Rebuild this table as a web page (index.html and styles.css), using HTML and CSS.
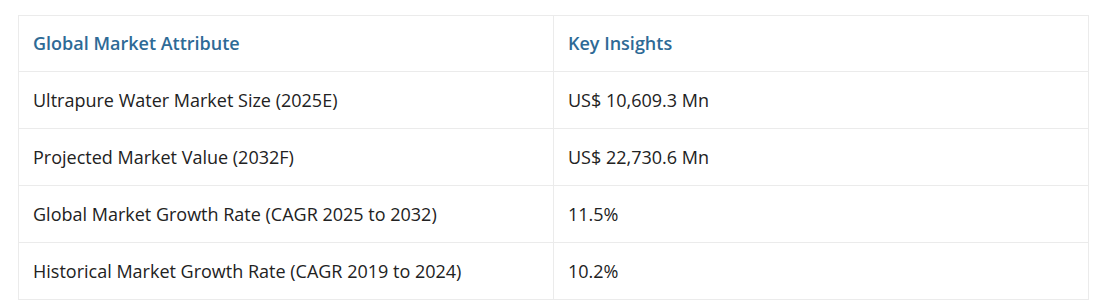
FILE: index.html
```html
<!DOCTYPE html>
<html lang="en">
<head>
<meta charset="utf-8">
<title>Ultrapure Water Market</title>
<link rel="stylesheet" href="styles.css">
</head>
<body>
<div class="wrap">
<table class="insights">
<thead>
<tr><th>Global Market Attribute</th><th>Key Insights</th></tr>
</thead>
<tbody>
<tr><td>Ultrapure Water Market Size (2025E)</td><td>US$ 10,609.3 Mn</td></tr>
<tr><td>Projected Market Value (2032F)</td><td>US$ 22,730.6 Mn</td></tr>
<tr><td>Global Market Growth Rate (CAGR 2025 to 2032)</td><td>11.5%</td></tr>
<tr><td>Historical Market Growth Rate (CAGR 2019 to 2024)</td><td>10.2%</td></tr>
</tbody>
</table>
</div>
</body>
</html>
```
FILE: styles.css
```css
html, body {
  margin: 0;
  padding: 0;
  background: #ffffff;
}
.wrap {
  padding: 15px 11px 0 18px;
}
.insights {
  width: 100%;
  border-collapse: collapse;
  table-layout: fixed;
  font-family: "Open Sans", "Liberation Sans", sans-serif;
  font-size: 18px;
  line-height: 26px;
  color: #222222;
}
.insights th,
.insights td {
  border: 1px solid #ebebeb;
  padding: 15px 14px;
  text-align: left;
  width: 50%;
}
.insights th {
  padding-top: 14px;
  font-weight: 600;
  color: #2e6a96;
}
```
